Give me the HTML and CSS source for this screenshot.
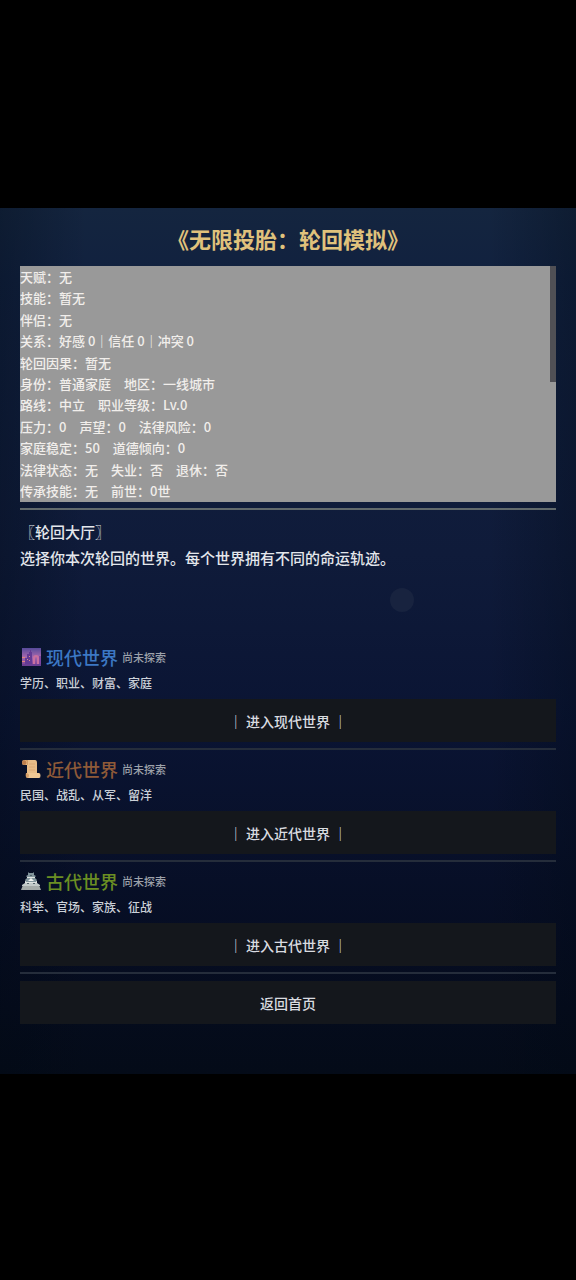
FILE: index.html
```html
<!DOCTYPE html>
<html lang="zh-CN">
<head>
    <meta charset="UTF-8">
    <meta name="viewport" content="width=device-width, initial-scale=1.0">
    <title>《无限投胎：轮回模拟》</title>
    <link rel="stylesheet" href="styles.css">
</head>
<body>
    <main class="game">
        <h1>《无限投胎：轮回模拟》</h1>

        <div class="status">
            <p>天赋：无</p>
            <p>技能：暂无</p>
            <p>伴侣：无</p>
            <p>关系：好感 0｜信任 0｜冲突 0</p>
            <p>轮回因果：暂无</p>
            <p>身份：普通家庭　地区：一线城市</p>
            <p>路线：中立　职业等级：Lv.0</p>
            <p>压力：0　声望：0　法律风险：0</p>
            <p>家庭稳定：50　道德倾向：0</p>
            <p>法律状态：无　失业：否　退休：否</p>
            <p>传承技能：无　前世：0世</p>
            <div class="scroll-thumb"></div>
        </div>
        <hr class="status-line">

        <section class="hall">
            <h2>〖轮回大厅〗</h2>
            <p>选择你本次轮回的世界。每个世界拥有不同的命运轨迹。</p>
            <div class="touch"></div>
        </section>

        <section class="world">
            <div class="world-head">
                <!-- city at dusk -->
                <svg class="icon" viewBox="0 0 20 20">
                    <defs>
                        <linearGradient id="dusk" x1="0" y1="0" x2="0" y2="1">
                            <stop offset="0" stop-color="#564a9a"/>
                            <stop offset="0.5" stop-color="#a568ae"/>
                            <stop offset="1" stop-color="#7a3f93"/>
                        </linearGradient>
                    </defs>
                    <rect x="1" y="1" width="19" height="18" fill="url(#dusk)"/>
                    <path d="M1 10h3v1H1zM1 14h5v1H1z" fill="#e0857a"/>
                    <path d="M4 18V11h2V7h2V5h1V3h1v2h1v13z" fill="#633a94"/>
                    <path d="M12 18v-7q0-3 3-3t3 3v7h-2v-6q0-2-1-2t-1 2v6z" fill="#c9709f"/>
                    <path d="M18 9h2v9h-2z" fill="#7d459f"/>
                    <path d="M6 12h1v1H6zM8 9h1v1H8zM8 13h1v1H8z" fill="#d98c8c"/>
                    <path d="M1 17h19v2H1z" fill="#6b3f92"/>
                </svg>
                <h3 class="modern">现代世界</h3>
                <span class="tag">尚未探索</span>
            </div>
            <p>学历、职业、财富、家庭</p>
            <button>｜ 进入现代世界 ｜</button>
            <hr>
        </section>

        <section class="world">
            <div class="world-head">
                <!-- scroll -->
                <svg class="icon" viewBox="0 0 20 20">
                    <path d="M3 1h11q2 0 2 3v11H6V6H3Q1 6 1 3.500Q1 1 3 1z" fill="#e8bd88"/>
                    <path d="M3 1q2 0 2.500 2.500Q5.500 6 3 6Q1 6 1 3.500Q1 1 3 1z" fill="#bd7e4c"/>
                    <path d="M6 6V4q0-2-2-3h3v5z" fill="#d39d66"/>
                    <path d="M5 14h13q1.500 0 1.500 2.500T18 19H7q-2 0-2-3z" fill="#f0c894"/>
                    <path d="M5 14q3 0 3 2.500T6 19Q4 18 5 14z" fill="#d59e68"/>
                    <path d="M8 5h6M8 8h6M8 11h6" stroke="#d4a06c" stroke-width="0.6"/>
                </svg>
                <h3 class="republic">近代世界</h3>
                <span class="tag">尚未探索</span>
            </div>
            <p>民国、战乱、从军、留洋</p>
            <button>｜ 进入近代世界 ｜</button>
            <hr>
        </section>

        <section class="world">
            <div class="world-head">
                <!-- castle -->
                <svg class="icon" viewBox="0 0 20 20">
                    <path d="M2 14h16l2 5H0z" fill="#a5aba9"/>
                    <path d="M4 10h12v4H4zM6 5h8v3H6z" fill="#dfe3e1"/>
                    <path d="M1 14l3-2h12l3 2v1H1z" fill="#c3cac9"/>
                    <path d="M4 9l2-2h8l2 2-1 2H5z" fill="#82959c"/>
                    <path d="M5 5l2-1V1l1 1h4l1-1v3l2 1-1 1H6z" fill="#82959c"/>
                    <path d="M7 10l3-3 3 3z" fill="#f1f3f1"/>
                    <path d="M9 4h2v1H9zM6 12h2v1H6zM12 12h2v1h-2z" fill="#53636b"/>
                </svg>
                <h3 class="ancient">古代世界</h3>
                <span class="tag">尚未探索</span>
            </div>
            <p>科举、官场、家族、征战</p>
            <button>｜ 进入古代世界 ｜</button>
            <hr>
        </section>

        <button>返回首页</button>
    </main>
</body>
</html>
```
FILE: styles.css
```css
* {
    box-sizing: border-box;
}
body {
    margin: 0;
    padding: 208px 0;
    background: #000;
    color: #e4e7ec;
    font-family: "Noto Sans CJK SC", "Noto Sans", sans-serif;
    font-weight: 500;
}
h1, h2, h3, p {
    margin: 0;
    font-weight: 500;
}
.game {
    padding: 14px 20px 50px;
    background:
        linear-gradient(to right, rgba(0, 8, 18, 0.3), transparent 15%, transparent 85%, rgba(0, 8, 18, 0.3)),
        linear-gradient(#14253f, #11213f 8%, #0f1b3a 40%, #0a1433 60%, #060d22 85%, #040b18);
}
h1 {
    height: 44px;
    line-height: 32px;
    font-size: 22px;
    font-weight: 700;
    text-align: center;
    color: #e0c27c;
}
.status {
    position: relative;
    display: grid;
    grid-template-rows: repeat(11, 1fr);
    align-items: center;
    height: 236px;
    overflow: hidden;
    background: #999;
    color: #f1eeeb;
    font-size: 13px;
    line-height: 20px;
}
.scroll-thumb {
    position: absolute;
    top: 0;
    right: 0;
    width: 6px;
    height: 116px;
    background: #505055;
}
hr {
    height: 2px;
    margin: 0;
    border: 0;
    background: #252d3b;
}
.status-line {
    margin-top: 6px;
    background: #626a6c;
}
.hall {
    position: relative;
    height: 134px;
    padding-top: 9px;
    font-size: 15px;
    line-height: 26px;
}
.hall h2 {
    font-size: 15px;
}
.touch {
    position: absolute;
    top: 78px;
    left: 69%;
    width: 24px;
    height: 24px;
    border-radius: 50%;
    background: #18233f;
}
.world {
    margin-bottom: 7px;
}
.world-head {
    display: flex;
    align-items: center;
    gap: 4px;
    height: 26px;
}
.icon {
    width: 22px;
    height: 20px;
}
.world h3 {
    font-size: 18px;
    line-height: 26px;
}
.world .modern {
    color: #3c78c4;
}
.world .republic {
    color: #8f5a38;
}
.world .ancient {
    color: #6b8e23;
}
.tag {
    font-size: 11px;
    line-height: 16px;
    color: #9ca1aa;
}
.world p {
    font-size: 12px;
    line-height: 26px;
    color: #cbd0d8;
}
button {
    display: block;
    width: 100%;
    height: 43px;
    padding: 0;
    border: 0;
    background: #14171c;
    color: #dadce0;
    font: inherit;
    font-size: 14px;
    cursor: pointer;
}
.world button {
    margin: 3px 0 6px;
}
.world hr {
    margin-bottom: 6px;
}
.world {
    margin-bottom: 0;
}
.world:last-of-type {
    margin-bottom: 7px;
}
```
